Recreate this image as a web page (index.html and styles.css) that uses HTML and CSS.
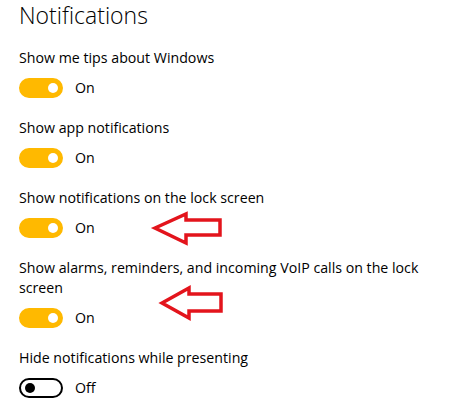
FILE: index.html
```html
<!doctype html>
<html lang="en">
<head>
<meta charset="utf-8">
<meta name="viewport" content="width=device-width,initial-scale=1">
<title>Notifications</title>
<link rel="stylesheet" href="styles.css">
</head>
<body>
<main class="page">
  <h1>Notifications</h1>

  <div class="setting">
    <div class="label">Show me tips about Windows</div>
    <div class="switch-row"><span class="switch on"></span><span>On</span></div>
  </div>

  <div class="setting">
    <div class="label">Show app notifications</div>
    <div class="switch-row"><span class="switch on"></span><span>On</span></div>
  </div>

  <div class="setting">
    <div class="label">Show notifications on the lock screen</div>
    <div class="switch-row"><span class="switch on"></span><span>On</span></div>
  </div>

  <div class="setting">
    <div class="label">Show alarms, reminders, and incoming VoIP calls on the lock screen</div>
    <div class="switch-row"><span class="switch on"></span><span>On</span></div>
  </div>

  <div class="setting">
    <div class="label">Hide notifications while presenting</div>
    <div class="switch-row"><span class="switch"></span><span>Off</span></div>
  </div>

  <svg class="marks" width="457" height="410" viewBox="0 0 457 410">
    <polygon points="155,228 186,214 186,220 220,220 220,235 186,235 186,243"/>
    <polygon points="162,303 189,288 189,294 221,294 221,311 189,311 189,318"/>
  </svg>
</main>
</body>
</html>
```

FILE: styles.css
```css
:root{--accent:#ffb900;--text:#000;--red:#e3141c}
*{box-sizing:border-box}
body{margin:0;background:#fff;color:var(--text);font-family:"Open Sans","Noto Sans",sans-serif;font-size:14.2px}
.page{position:relative;width:457px;height:410px;padding:0 19px;overflow:hidden}
h1{margin:0 0 17px;font-size:23px;font-weight:300;line-height:31px}
.setting{display:flex;flex-direction:column;gap:10px;margin-bottom:20px;width:420px}
.label{line-height:20px}
.switch-row{display:flex;align-items:center;gap:12px;height:20px;line-height:20px}
.switch{position:relative;width:44px;height:20px;border-radius:10px;border:2px solid #000;background:#fff;flex:none}
.switch::after{content:"";position:absolute;top:3px;left:4px;width:10px;height:10px;border-radius:50%;background:#000}
.switch.on{background:var(--accent);border-color:var(--accent)}
.switch.on::after{left:auto;right:3px;background:#fff}
.marks{position:absolute;left:0;top:0;pointer-events:none}
.marks polygon{fill:none;stroke:var(--red);stroke-width:3.5;stroke-linejoin:miter}
```
